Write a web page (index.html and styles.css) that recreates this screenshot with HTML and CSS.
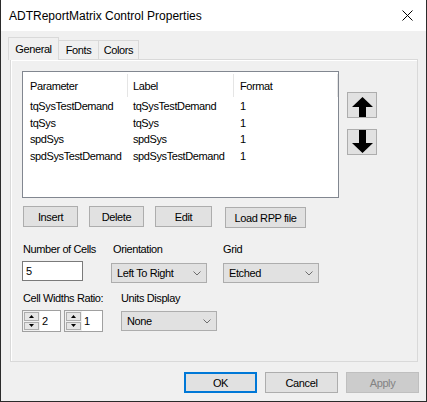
FILE: index.html
```html
<!DOCTYPE html>
<html>
<head>
<meta charset="utf-8">
<link rel="stylesheet" href="styles.css">
</head>
<body>
<div class="window">
  <div class="titlebar">
    <span class="title">ADTReportMatrix Control Properties</span>
    <svg class="close" width="11" height="11" viewBox="0 0 11 11"><path d="M0.5 0.5 L10.5 10.5 M10.5 0.5 L0.5 10.5" stroke="#000" stroke-width="1"/></svg>
  </div>
  <div class="content">
    <div class="tabs">
      <div class="tab active">General</div>
      <div class="tab fonts">Fonts</div>
      <div class="tab colors">Colors</div>
    </div>
    <div class="panel">
      <div class="top">
        <div class="list">
          <div class="lrow lhead">
            <div class="c1">Parameter</div>
            <div class="c2">Label</div>
            <div class="c3">Format</div>
          </div>
          <div class="rows">
            <div class="lrow"><div class="c1">tqSysTestDemand</div><div class="c2">tqSysTestDemand</div><div class="c3">1</div></div>
            <div class="lrow"><div class="c1">tqSys</div><div class="c2">tqSys</div><div class="c3">1</div></div>
            <div class="lrow"><div class="c1">spdSys</div><div class="c2">spdSys</div><div class="c3">1</div></div>
            <div class="lrow"><div class="c1">spdSysTestDemand</div><div class="c2">spdSysTestDemand</div><div class="c3">1</div></div>
          </div>
        </div>
        <div class="arrows">
          <div class="arrow up"><svg width="28" height="24" viewBox="0 0 28 24"><polygon points="14.5,4 25,14 18,14 18,24 11,24 11,14 4,14" fill="#000"/></svg></div>
          <div class="arrow down"><svg width="28" height="24" viewBox="0 0 28 24"><polygon points="11,0 18,0 18,13 25,13 14.5,23 4,13 11,13" fill="#000"/></svg></div>
        </div>
      </div>
      <div class="btnrow">
        <div class="btn b-insert">Insert</div>
        <div class="btn b-delete">Delete</div>
        <div class="btn b-edit">Edit</div>
        <div class="btn b-load">Load RPP file</div>
      </div>
      <div class="fields row1">
        <div class="col col-a">
          <div class="lbl">Number of Cells</div>
          <div class="textbox">5</div>
        </div>
        <div class="col col-b">
          <div class="lbl">Orientation</div>
          <div class="select"><span>Left To Right</span><svg width="8" height="5" viewBox="0 0 8 5"><polyline points="0.5,0.5 4,4 7.5,0.5" fill="none" stroke="#6d6d6d" stroke-width="1"/></svg></div>
        </div>
        <div class="col col-c">
          <div class="lbl">Grid</div>
          <div class="select"><span>Etched</span><svg width="8" height="5" viewBox="0 0 8 5"><polyline points="0.5,0.5 4,4 7.5,0.5" fill="none" stroke="#6d6d6d" stroke-width="1"/></svg></div>
        </div>
      </div>
      <div class="fields row2">
        <div class="col col-d">
          <div class="lbl">Cell Widths Ratio:</div>
          <div class="spins">
            <div class="spin">
              <div class="spinbtns">
                <div class="sb"><svg width="5" height="3" viewBox="0 0 5 3"><polygon points="2.5,0 5,3 0,3" fill="#000"/></svg></div>
                <div class="sb"><svg width="5" height="3" viewBox="0 0 5 3"><polygon points="0,0 5,0 2.5,3" fill="#000"/></svg></div>
              </div>
              <div class="spinval">2</div>
            </div>
            <div class="spin">
              <div class="spinbtns">
                <div class="sb"><svg width="5" height="3" viewBox="0 0 5 3"><polygon points="2.5,0 5,3 0,3" fill="#000"/></svg></div>
                <div class="sb"><svg width="5" height="3" viewBox="0 0 5 3"><polygon points="0,0 5,0 2.5,3" fill="#000"/></svg></div>
              </div>
              <div class="spinval">1</div>
            </div>
          </div>
        </div>
        <div class="col col-e">
          <div class="lbl">Units Display</div>
          <div class="select"><span>None</span><svg width="8" height="5" viewBox="0 0 8 5"><polyline points="0.5,0.5 4,4 7.5,0.5" fill="none" stroke="#6d6d6d" stroke-width="1"/></svg></div>
        </div>
      </div>
    </div>
    <div class="footer">
      <div class="btn fbtn ok">OK</div>
      <div class="btn fbtn">Cancel</div>
      <div class="btn fbtn disabled">Apply</div>
    </div>
  </div>
</div>
</body>
</html>
```
FILE: styles.css
```css
* { box-sizing: border-box; }
body {
  margin: 0;
  font-family: "Liberation Sans", Arial, sans-serif;
  font-size: 11px;
  letter-spacing: -0.4px;
  color: #000;
  background: #fff;
}
.window {
  width: 427px;
  height: 402px;
  border: 1px solid #2b2b2b;
  border-top: none;
  background: #f0f0f0;
  display: flex;
  flex-direction: column;
}
.titlebar {
  height: 31px;
  flex: none;
  background: #fff;
  display: flex;
  align-items: center;
  justify-content: space-between;
  padding: 0 13px 0 8px;
}
.title {
  font-size: 12px;
  letter-spacing: 0;
  color: #000;
}
.close { display: block; }
.content {
  flex: 1;
  padding: 6px 8px 0 7px;
}
.tabs {
  display: flex;
  align-items: flex-end;
  height: 22px;
}
.tab {
  height: 19px;
  border: 1px solid #d9d9d9;
  border-bottom: none;
  background: #f0f0f0;
  display: flex;
  align-items: center;
  justify-content: center;
}
.tab.active {
  width: 51px;
  height: 23px;
  margin-bottom: -1px;
  position: relative;
  z-index: 1;
  padding-bottom: 1px;
}
.tab.fonts { width: 41px; margin-left: -1px; }
.tab.colors { width: 41px; margin-left: -1px; }
.panel {
  margin-left: 2px;
  height: 303px;
  border: 1px solid #d9d9d9;
  box-shadow: inset 1px 1px 0 #fff;
  padding: 11px 0 0 11px;
}
.top { display: flex; }
.list {
  width: 317px;
  height: 127px;
  border: 1px solid #828790;
  background: #fff;
}
.lrow { display: flex; }
.lhead {
  height: 25px;
  padding-top: 2px;
}
.lhead > div {
  height: 23px;
  border-right: 1px solid #e5e5e5;
}
.lrow > div {
  display: flex;
  align-items: center;
  white-space: nowrap;
}
.c1 { width: 105px; padding-left: 7px; }
.c2 { width: 106px; padding-left: 5px; }
.c3 { width: 104px; padding-left: 6px; }
.rows { padding-top: 1px; }
.rows .lrow { height: 16.6px; }
.arrows {
  margin-left: 8px;
  display: flex;
  flex-direction: column;
}
.arrow {
  width: 30px;
  height: 26px;
  border: 1px solid #adadad;
  background: #e1e1e1;
}
.arrow svg { display: block; }
.arrow.up { margin-top: 21px; }
.arrow.down { margin-top: 11px; }
.btnrow {
  display: flex;
  align-items: flex-start;
  margin-top: 8px;
  margin-left: 1px;
}
.btn {
  height: 21px;
  border: 1px solid #adadad;
  background: #e1e1e1;
  display: flex;
  align-items: center;
  justify-content: center;
}
.b-insert { width: 55px; }
.b-delete { width: 55px; margin-left: 11px; }
.b-edit { width: 57px; margin-left: 11px; }
.b-load { width: 81px; margin-left: 13px; margin-top: 1px; }
.fields { display: flex; }
.row1 { margin-top: 14px; }
.row2 { margin-top: 8px; }
.lbl {
  height: 14px;
  line-height: 14px;
  white-space: nowrap;
}
.col-a { width: 89px; }
.col-a .lbl { padding-left: 1px; }
.col-b { width: 112px; }
.col-b .lbl { padding-left: 2px; }
.col-d { width: 99px; }
.col-d .lbl { padding-left: 1px; }
.textbox {
  width: 61px;
  height: 20px;
  margin-top: 5px;
  border: 1px solid #7a7a7a;
  background: #fff;
  padding-left: 3px;
  display: flex;
  align-items: center;
}
.select {
  width: 96px;
  height: 20px;
  margin-top: 7px;
  border: 1px solid #adadad;
  background: #e1e1e1;
  display: flex;
  align-items: center;
  justify-content: space-between;
  padding: 0 5px 0 5px;
}
.select svg { display: block; }
.col-e .select { margin-top: 6px; }
.spins {
  display: flex;
  gap: 3px;
  margin-top: 5px;
}
.spin {
  width: 39px;
  height: 22px;
  border: 1px solid #a0a0a0;
  background: #fff;
  display: flex;
}
.spinbtns {
  width: 17px;
  display: flex;
  flex-direction: column;
  background: #f0f0f0;
  padding: 1px;
  gap: 1px;
}
.sb {
  flex: 1;
  border: 1px solid #adadad;
  background: #e5e5e5;
  display: flex;
  align-items: center;
  justify-content: center;
}
.sb svg { display: block; }
.spinval {
  padding-left: 2px;
  display: flex;
  align-items: center;
}
.footer {
  display: flex;
  justify-content: flex-end;
  gap: 8px;
  margin-top: 10px;
  margin-right: -1px;
}
.fbtn { width: 73px; }
.fbtn.ok { border: 2px solid #0078d7; }
.fbtn.disabled {
  background: #cccccc;
  border-color: #bfbfbf;
  color: #838383;
}
```
